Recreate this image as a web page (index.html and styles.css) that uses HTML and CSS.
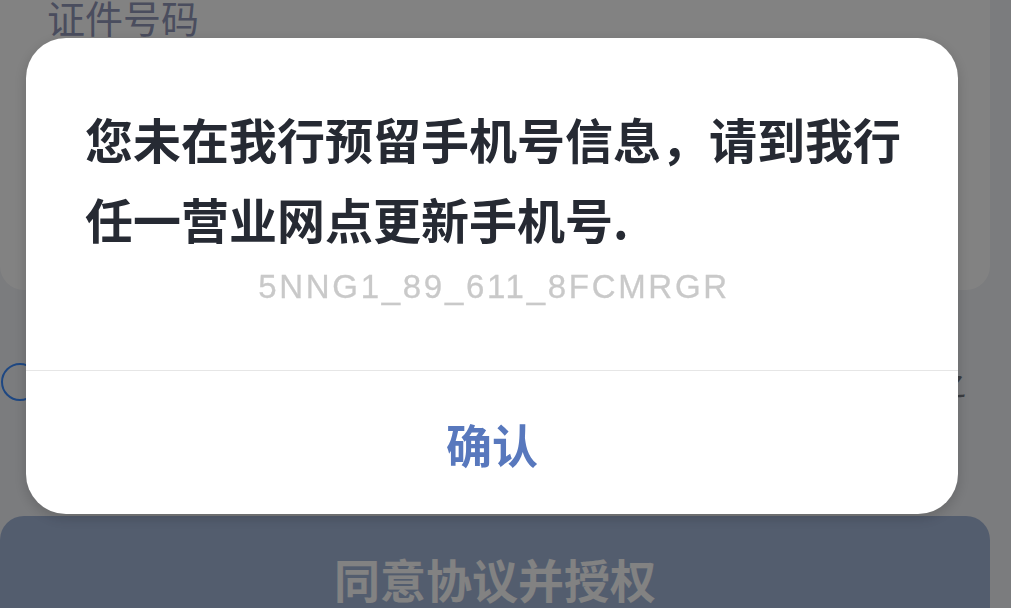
FILE: index.html
```html
<!DOCTYPE html>
<html lang="zh-CN">
<head>
<meta charset="utf-8">
<title>提示</title>
<link rel="stylesheet" href="styles.css">
</head>
<body>
<div class="page">
  <section class="card">
    <div class="field-label">证件号码</div>
    <div class="field-input"></div>
  </section>
  <div class="agree">
    <span class="radio"></span>
    <span class="agree-text">我已阅读并同意《个人信息授权书》《电子服务协议》之</span>
  </div>
  <button class="submit" type="button">同意协议并授权</button>
</div>

<div class="mask">
  <div class="dialog" role="dialog">
    <div class="dialog-body">
      <p class="message">您未在我行预留手机号信息，请到我行任一营业网点更新手机号.</p>
      <p class="code">5NNG1_89_611_8FCMRGR</p>
    </div>
    <div class="dialog-footer">
      <button class="confirm" type="button">确认</button>
    </div>
  </div>
</div>
</body>
</html>
```

FILE: styles.css
```css
* {
  box-sizing: border-box;
}

html, body {
  margin: 0;
  padding: 0;
  height: 100%;
  overflow: hidden;
}

body {
  background: #f1f3f7;
  font-family: "Noto Sans CJK SC", "Noto Sans", sans-serif;
}

.page {
  padding: 0 21px 0 0;
}

.card {
  background: #ffffff;
  border-radius: 24px;
  margin-top: -48px;
  padding: 40px 0 0 47px;
}

.field-label {
  font-size: 38px;
  line-height: 50px;
  color: #9197b9;
}

.field-input {
  height: 248px;
}

.agree {
  display: flex;
  align-items: center;
  margin-top: 73px;
  padding: 0 24px 0 1px;
  gap: 27px;
  white-space: nowrap;
}

.radio {
  flex: none;
  width: 38px;
  height: 38px;
  border: 2px solid #3c8cff;
  border-radius: 50%;
}

.agree-text {
  flex: 1;
  min-width: 0;
  text-align: right;
  font-size: 30px;
  line-height: 38px;
  color: #74777e;
}

.submit {
  display: flex;
  align-items: center;
  justify-content: center;
  width: 100%;
  height: 124px;
  margin-top: 115px;
  border: none;
  border-radius: 24px;
  background: #a3b6d8;
  color: #ffffff;
  font-family: "Noto Sans CJK SC", sans-serif;
  font-size: 46px;
  font-weight: 700;
  padding: 0;
}

.mask {
  position: fixed;
  inset: 0;
  background: rgba(0, 0, 0, 0.49);
  display: flex;
  align-items: flex-start;
  padding: 38px 0 0 26px;
}

.dialog {
  width: 932px;
  height: 476px;
  background: #ffffff;
  border-radius: 40px;
  box-shadow: 0 4px 14px rgba(0, 0, 0, 0.18);
  display: flex;
  flex-direction: column;
  overflow: hidden;
}

.dialog-body {
  padding: 60px 55px 63px 59px;
}

.message {
  margin: 0;
  font-size: 48px;
  line-height: 80px;
  font-weight: 700;
  color: #262a33;
}

.code {
  margin: 9px 0 0;
  font-family: "Liberation Sans", Arial, sans-serif;
  font-size: 33px;
  line-height: 40px;
  letter-spacing: 2.7px;
  color: #c9c9c9;
  text-align: center;
  -webkit-text-stroke: 0.3px #c9c9c9;
}

.dialog-footer {
  flex: 1;
  border-top: 1px solid #e6e6e6;
  display: flex;
  align-items: center;
  justify-content: center;
}

.confirm {
  border: none;
  background: transparent;
  font-family: "Noto Sans CJK SC", sans-serif;
  font-size: 46px;
  font-weight: 700;
  color: #5878bd;
  padding: 0;
  line-height: 60px;
}
```
